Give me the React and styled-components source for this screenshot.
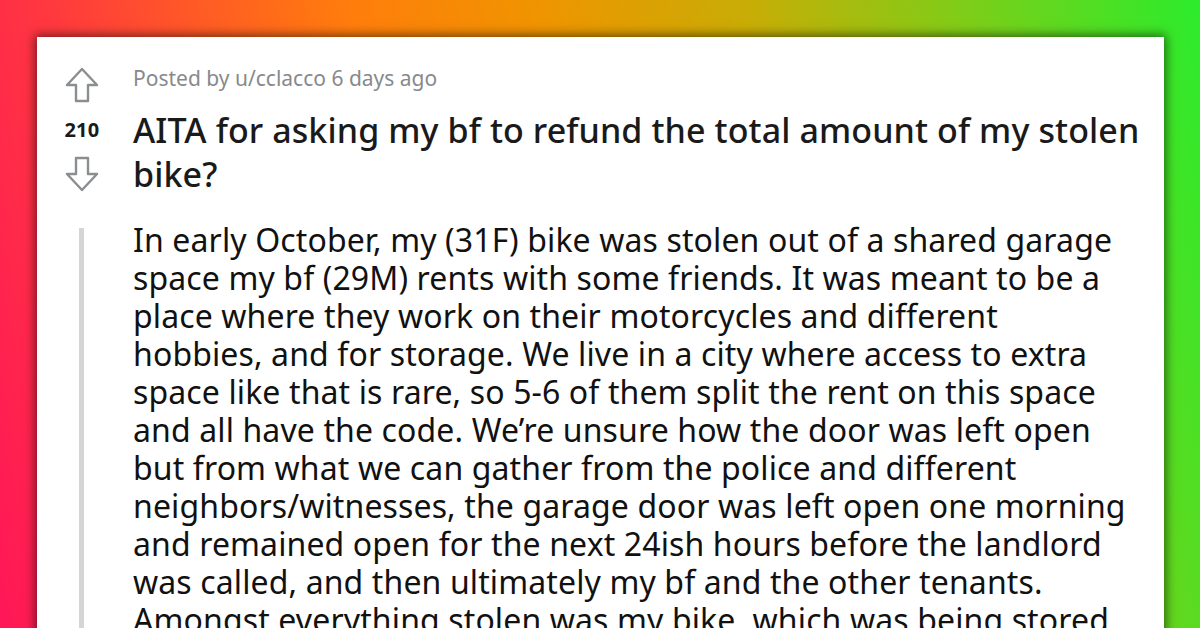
import React from "react";
import styled, { createGlobalStyle } from "styled-components";

const Global = createGlobalStyle`
  html, body { margin: 0; padding: 0; }
  body { width: 1200px; height: 628px; overflow: hidden; }
`;

const Page = styled.div`
  width: 1200px;
  height: 628px;
  box-sizing: border-box;
  overflow: hidden;
  padding: 37px 36px 0 37px;
  background: linear-gradient(78deg, #ff1658 0%, #ff3a3e 14%, #ff7d0c 36%, #f09400 50%, #c8ad06 66%, #7fcd18 82%, #2bec2c 100%);
`;

const Card = styled.div`
  background: #ffffff;
  height: 640px;
  display: grid;
  grid-template-columns: 90px 1fr;
  grid-template-rows: auto 1fr;
  box-shadow: 0 0 10px 2px rgba(0, 0, 0, 0.55);
`;

const VoteCol = styled.div`
  display: flex;
  flex-direction: column;
  align-items: center;
  padding-top: 30px;
`;

const Score = styled.div`
  font-family: "Noto Sans", "Open Sans", sans-serif;
  font-weight: 700;
  font-size: 20px;
  line-height: 22px;
  color: #1a1a1b;
  margin: 16px 0 15px;
  letter-spacing: 0.3px;
`;

const Header = styled.div`
  padding: 27px 20px 0 6px;
`;

const Meta = styled.div`
  font-family: "Noto Sans", "Open Sans", sans-serif;
  font-size: 21px;
  line-height: 28px;
  color: #878a8c;
`;

const Title = styled.h1`
  margin: 16px 0 0;
  font-family: "Noto Sans", "Inter", sans-serif;
  font-weight: 500;
  font-size: 34px;
  line-height: 44px;
  color: #1a1a1b;
  letter-spacing: 0.1px;
`;

const Gutter = styled.div`
  display: flex;
  justify-content: center;
  padding-top: 32px;
`;

const Rule = styled.div`
  width: 5px;
  margin-right: 2px;
  background: #d5d5d5;
`;

const Body = styled.p`
  margin: 0;
  padding: 25px 0 0 6px;
  font-family: "Noto Sans", "Open Sans", sans-serif;
  font-size: 32px;
  line-height: 38px;
  letter-spacing: 0.12px;
  color: #111111;
  white-space: nowrap;
`;

const Arrow = ({ down }) => (
  <svg width="34" height="36" viewBox="0 0 34 36" style={{ transform: down ? "rotate(180deg)" : undefined }}>
    <path
      d="M17 2 L32 18 H23 V34 H11 V18 H2 Z"
      fill="none"
      stroke="#8b8e90"
      strokeWidth="2.4"
      strokeLinejoin="round"
    />
  </svg>
);

const lines = [
  "In early October, my (31F) bike was stolen out of a shared garage",
  "space my bf (29M) rents with some friends. It was meant to be a",
  "place where they work on their motorcycles and different",
  "hobbies, and for storage. We live in a city where access to extra",
  "space like that is rare, so 5-6 of them split the rent on this space",
  "and all have the code. We\u2019re unsure how the door was left open",
  "but from what we can gather from the police and different",
  "neighbors/witnesses, the garage door was left open one morning",
  "and remained open for the next 24ish hours before the landlord",
  "was called, and then ultimately my bf and the other tenants.",
  "Amongst everything stolen was my bike, which was being stored",
];

export default function App() {
  return (
    <Page>
      <Global />
      <Card>
        <VoteCol>
          <Arrow />
          <Score>210</Score>
          <Arrow down />
        </VoteCol>
        <Header>
          <Meta>Posted by u/cclacco 6 days ago</Meta>
          <Title>
            AITA for asking my bf to refund the total amount of my stolen
            <br />
            bike?
          </Title>
        </Header>
        <Gutter>
          <Rule />
        </Gutter>
        <Body>
          {lines.map((l, i) => (
            <React.Fragment key={i}>
              {l}
              {i < lines.length - 1 && <br />}
            </React.Fragment>
          ))}
        </Body>
      </Card>
    </Page>
  );
}
